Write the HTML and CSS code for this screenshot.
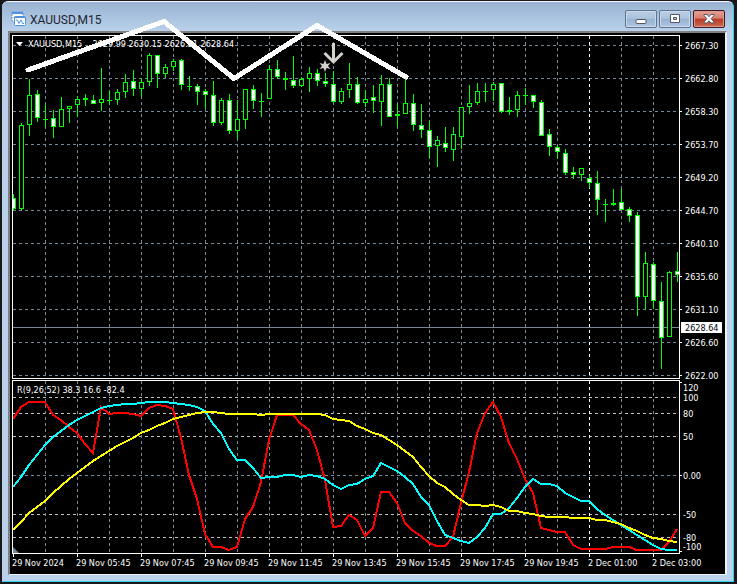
FILE: index.html
```html
<!DOCTYPE html>
<html lang="en">
<head>
  <meta charset="UTF-8">
  <title>XAUUSD,M15</title>
  <meta name="viewport" content="width=device-width,initial-scale=1">
  <link rel="stylesheet" href="styles.css">
</head>
<body>
  <main class="window">
    <header class="titlebar">
      <svg class="app-icon" width="16" height="16" viewBox="0 0 16 16" aria-hidden="true">
        <rect x="1" y="1" width="11" height="9" fill="#fff" stroke="#4f8fe0" stroke-dasharray="2 1"/>
        <path d="M1 2h11" stroke="#4f8fe0" stroke-width="2"/>
        <path d="M2.500 7l2-2 1.500 2" fill="none" stroke="#4f8fe0"/>
        <rect x="3.500" y="5.500" width="11" height="9" rx="1" fill="#fff" stroke="#4f8fe0"/>
        <path d="M4 6.500h10" stroke="#4f8fe0"/>
        <path d="M5 9h1.500l1.500 3.500 2-3.500 1.500 3.500h1.500" fill="none" stroke="#4f8fe0"/>
      </svg>
      <h1>XAUUSD,M15</h1>
      <div class="controls">
        <button type="button" class="ctl" aria-label="Minimize">
          <svg width="12" height="12" viewBox="0 0 12 12"><rect x="1" y="6.500" width="10" height="4" rx="1" fill="#fff" stroke="#535666"/></svg>
        </button>
        <button type="button" class="ctl" aria-label="Restore">
          <svg width="12" height="12" viewBox="0 0 12 12"><path fill-rule="evenodd" d="M1.500 1.500h9v8h-9zM4.500 4.500h3v2h-3z" fill="#fff" stroke="#535666"/></svg>
        </button>
        <button type="button" class="ctl close" aria-label="Close">
          <svg width="12" height="12" viewBox="0 0 12 12"><path d="M1 1.500h3l2 2.200 2-2.200h3v1L8.200 5.700 11 9v1H8L6 7.800 4 10H1V9l2.800-3.300L1 2.500z" fill="#fff" stroke="#535666"/></svg>
        </button>
      </div>
    </header>

    <section class="chart">
      <svg class="plot price" id="price" role="img" aria-label="XAUUSD candles"></svg>
      <svg class="axis" id="priceAxis"></svg>
      <svg class="plot osc" id="osc" role="img" aria-label="R indicator"></svg>
      <svg class="axis" id="oscAxis"></svg>
      <div class="times">
        <span>29 Nov 2024</span>
        <span>29 Nov 05:45</span>
        <span>29 Nov 07:45</span>
        <span>29 Nov 09:45</span>
        <span>29 Nov 11:45</span>
        <span>29 Nov 13:45</span>
        <span>29 Nov 15:45</span>
        <span>29 Nov 17:45</span>
        <span>29 Nov 19:45</span>
        <span>2 Dec 01:00</span>
        <span>2 Dec 03:00</span>
      </div>
    </section>

    <!-- drawn pattern, runs over the title bar -->
    <svg class="pattern" aria-hidden="true">
      <polyline points="28,70 164,21.500 234,78.500 317,25.500 406,77"/>
    </svg>
  </main>
  <script src="chart.js"></script>
</body>
</html>
```
FILE: styles.css
```css
body {
  margin: 0;
  padding: 1px 3px 1px 2px;
  background: #18171c;
  font-family: Roboto, "Noto Sans", sans-serif;
}
.window {
  position: relative;
  box-sizing: border-box;
  border-top: 1px solid #f4f8fc;
  border-right: 1px solid #2fd3ee;
  border-bottom: 1px solid #2fd3ee;
  border-radius: 6px 6px 0 0;
  background: #b9d1ea;
  padding: 0 6px;
}
.titlebar {
  display: flex;
  align-items: center;
  height: 29px;
  margin: 0 -6px;
  padding: 0 8px 0 9px;
  border-radius: 5px 5px 0 0;
  background: linear-gradient(#99b3d2, #b9d1ea);
}
.titlebar h1 {
  flex: 1;
  margin: 6px 0 0 3px;
  font-size: 12px;
  line-height: 16px;
  font-weight: normal;
  color: #1e2430;
}
.app-icon {
  margin-top: 4px;
}
.controls {
  display: flex;
  gap: 2px;
  margin-top: 5px;
}
.ctl {
  display: flex;
  align-items: center;
  justify-content: center;
  width: 32px;
  height: 18px;
  padding: 0;
  border: 1px solid #5e7390;
  border-radius: 2px;
  background: linear-gradient(#b9cde4 0%, #adc4de 45%, #98b2d1 50%, #aec6e2 100%);
  box-shadow: inset 0 0 0 1px #c9daed;
}
.ctl.close {
  border-color: #431422;
  background: linear-gradient(#e3a094 0%, #d6806f 45%, #b83a24 50%, #cc6a50 100%);
  box-shadow: inset 0 0 0 1px #dd9a8e;
}

.chart {
  display: grid;
  grid-template-columns: minmax(0, 1fr) 45px;
  row-gap: 1px;
  padding: 2px 0 0 2px;
  border: 2px solid #808080;
  border-right-color: #f0f0f0;
  border-bottom: 1px solid #f0f0f0;
  margin-bottom: 6px;
  background: #000;
  overflow: hidden;
}
.plot {
  box-sizing: border-box;
  width: 100%;
  border: 1px solid #fff;
}
.axis {
  width: 100%;
  overflow: visible;
}
.price, #priceAxis {
  height: 344px;
}
.osc, #oscAxis {
  height: 174px;
}
.chart text, .times {
  font-family: "DejaVu Sans Condensed", "DejaVu Sans", sans-serif;
  font-stretch: condensed;
  font-size: 9px;
  fill: #fff;
}
.chart .dark {
  fill: #000;
}
.times {
  grid-column: 1 / -1;
  display: flex;
  height: 20px;
  margin-top: -1px;
  line-height: 18px;
  color: #fff;
}
.times span {
  position: relative;
  flex: 0 0 64px;
  white-space: nowrap;
}
.times span::before {
  content: "";
  position: absolute;
  left: 1px;
  top: 0;
  width: 1px;
  height: 3px;
  background: #fff;
}

.grid {
  stroke: #778899;
  stroke-dasharray: 3 3;
}
.grid.level {
  stroke: #c0c0c0;
}
.grid.day {
  stroke: #fff;
}
.last {
  stroke: #778899;
}
.tick {
  stroke: #fff;
}
.candle {
  stroke: #0f0;
  fill: #000;
  shape-rendering: crispEdges;
}
.candle.down {
  fill: #fff;
}
.mark {
  fill: none;
  stroke: #d5d1cb;
  stroke-width: 3;
}
.star {
  fill: #d5d1cb;
}
.line {
  fill: none;
  stroke-width: 2;
  shape-rendering: crispEdges;
}
.fast { stroke: #f00; }
.mid { stroke: #0ff; }
.slow { stroke: #ff0; }

.pattern {
  position: absolute;
  left: -2px;
  top: -2px;
  width: 100%;
  height: 100%;
  pointer-events: none;
}
.pattern polyline {
  fill: none;
  stroke: #fff;
  stroke-width: 5;
  stroke-linecap: round;
  shape-rendering: crispEdges;
}
```
FILE: chart.js
```javascript
// one bar every 8px, first bar at x = 13
const STEP = 8;
const barX = i => 13 + i * STEP;

// wick top, wick bottom, body top, body bottom, 1 = down bar
const bars = [
  [194,211,198,209,1],[123,210,125,209,0],[79,136,95,125,0],[90,122,94,118,1],
  [105,127,119,119,0],[110,138,118,127,1],[97,127,109,127,0],[106,123,106,109,0],
  [96,117,99,105,0],[94,106,98,100,0],[95,104,100,104,1],[68,111,99,103,0],
  [91,105,100,100,0],[89,105,92,100,0],[74,98,82,92,0],[70,96,81,89,1],
  [78,97,82,89,0],[53,86,55,82,0],[55,88,55,74,1],[64,78,67,74,0],
  [59,71,61,67,0],[59,90,60,85,1],[76,91,86,86,0],[84,105,86,92,1],
  [89,108,91,95,1],[81,126,95,123,1],[98,125,100,123,0],[94,134,100,131,1],
  [100,139,119,131,0],[89,129,89,120,0],[85,109,89,101,1],[93,117,101,101,0],
  [65,99,69,99,0],[60,79,69,77,1],[72,90,78,80,1],[56,88,80,86,1],
  [77,87,79,86,0],[67,92,73,79,0],[69,86,73,81,1],[73,87,81,84,1],
  [71,103,84,102,1],[88,104,91,102,0],[63,98,84,90,0],[77,104,84,103,1],
  [90,107,99,103,0],[85,113,97,101,1],[75,126,84,102,0],[78,117,84,117,1],
  [104,127,114,116,0],[78,114,103,114,0],[94,131,103,125,1],[104,138,125,130,1],
  [121,158,130,147,1],[136,167,140,146,0],[127,152,143,148,1],[127,161,134,150,0],
  [107,149,107,137,0],[85,114,103,107,0],[83,105,91,103,0],[83,102,91,91,0],
  [82,101,84,90,0],[83,113,83,112,1],[97,115,110,112,0],[91,117,95,110,0],
  [88,105,95,95,0],[95,108,95,102,1],[100,136,102,136,1],[129,156,134,147,1],
  [145,159,147,152,1],[149,175,153,173,1],[167,179,172,175,1],[168,181,168,175,0],
  [175,188,178,183,1],[171,215,183,200,1],[199,222,204,204,0],[189,206,203,205,0],
  [189,210,202,210,1],[207,222,209,216,1],[212,316,215,297,1],[252,310,263,297,0],
  [262,309,264,301,1],[282,369,301,338,1],[271,337,272,337,0],[252,282,271,275,1]
];

const fast = [419,407,402,402,402,415,420,427,433,444,453,407,414,413,413,414,416,408,405,406,409,438,475,499,534,547,547,550,547,519,507,482,440,415,415,415,424,430,450,480,527,526,515,520,536,528,492,492,503,523,531,536,543,546,546,537,503,472,433,413,402,417,443,459,479,493,528,530,532,532,545,549,549,549,549,547,547,547,550,550,550,550,542,529];
const mid = [487,477,465,455,445,437,431,425,420,416,412,408,406,405,404,404,403,402,402,402,403,404,405,407,411,424,433,449,460,460,468,478,477,477,475,475,477,475,476,479,485,489,485,484,479,476,463,467,471,477,484,497,505,521,535,538,541,543,537,528,514,514,508,498,487,479,484,484,486,493,497,501,501,509,515,520,525,530,535,540,545,549,550,550];
const slow = [530,522,513,507,501,493,486,479,473,467,461,456,451,446,442,438,433,430,426,423,419,417,415,413,412,412,413,414,414,414,414,415,414,414,414,414,414,414,414,415,419,420,421,426,429,433,435,440,445,451,457,467,476,483,487,494,500,505,505,506,505,507,511,511,513,514,516,517,517,517,518,518,518,520,520,522,524,528,531,535,538,539,541,542];

const rows = [
  [45, '2667.30'], [78, '2662.80'], [111, '2658.30'], [144, '2653.70'],
  [177, '2649.20'], [210, '2644.70'], [243, '2640.10'], [276, '2635.60'],
  [309, '2631.10'], [342, '2626.60'], [375, '2622.00']
];
const levels = [397, 413, 436, 475, 514, 537];
const oscLabels = [
  [391, '120'], [401, '100'], [417, '80'], [440, '50'],
  [479, '0.00'], [518, '-50'], [541, '-80'], [550, '-100']
];

const hline = (y, cls) => `<line class="${cls}" x1="13" x2="4000" y1="${y + .5}" y2="${y + .5}"/>`;
const vline = (x, y1, y2, cls) => `<line class="${cls}" x1="${x + .5}" x2="${x + .5}" y1="${y1}" y2="${y2}"/>`;
const text = (x, y, s, cls = '') => `<text class="${cls}" x="${x}" y="${y}">${s}</text>`;
const tick = y => `<path class="tick" d="M680 ${y + .5}h2"/>`;

function columns(y1, y2) {
  let out = '';
  for (let i = 4; i < 300; i += 4) {
    out += vline(barX(i), y1, y2, i === 72 ? 'grid day' : 'grid');
  }
  return out;
}

function candle([high, low, top, bottom, down], i) {
  const x = barX(i);
  const body = top === bottom
    ? `<path class="candle" d="M${x - 2} ${top + .5}h5"/>`
    : `<rect class="candle${down ? ' down' : ''}" x="${x - 1.5}" y="${top + .5}" width="4" height="${bottom - top - 1}"/>`;
  return vline(x, high, low, 'candle') + body;
}

function series(values, cls) {
  return `<polyline class="line ${cls}" points="${values.map((y, i) => barX(i) + ',' + y).join(' ')}"/>`;
}

function render(id, x, y, content) {
  document.getElementById(id).innerHTML = `<g transform="translate(${-x} ${-y})">${content}</g>`;
}

render('price', 13, 36,
  rows.map(r => hline(r[0], 'grid')).join('') +
  columns(36, 378) +
  hline(327, 'last') +
  bars.map(candle).join('') +
  '<path class="mark" d="M333.500 43v17M324.500 53l9 9 9-9"/>' +
  '<path class="star" d="M325 60l1.500 4 4-1-2.500 3 2.500 3-4-1-1.500 4-1.500-4-4 1 2.500-3-2.500-3 4 1z"/>' +
  '<path fill="#fff" d="M16 42h7l-3.500 4z"/>' +
  text(28, 47, 'XAUUSD,M15&nbsp;&nbsp;&nbsp; 2629.99 2630.15 2626.51 2628.64'));

render('priceAxis', 680, 35,
  rows.map(r => tick(r[0]) + text(685, r[0] + 4, r[1])).join('') +
  '<rect x="681" y="322" width="41" height="11" fill="#fff"/>' +
  text(685, 331, '2628.64', 'dark'));

render('osc', 13, 381,
  levels.map(y => hline(y, y === 475 ? 'grid' : 'grid level')).join('') +
  columns(381, 553) +
  series(fast, 'fast') + series(mid, 'mid') + series(slow, 'slow') +
  '<path fill="#778899" d="M13 547l6 6h-6z"/>' +
  text(17, 393, 'R(9,26,52) 38.3 16.6 -82.4'));

render('oscAxis', 680, 380,
  [382, 475, 551].map(tick).join('') +
  oscLabels.map(l => text(683, l[0], l[1])).join(''));
```
